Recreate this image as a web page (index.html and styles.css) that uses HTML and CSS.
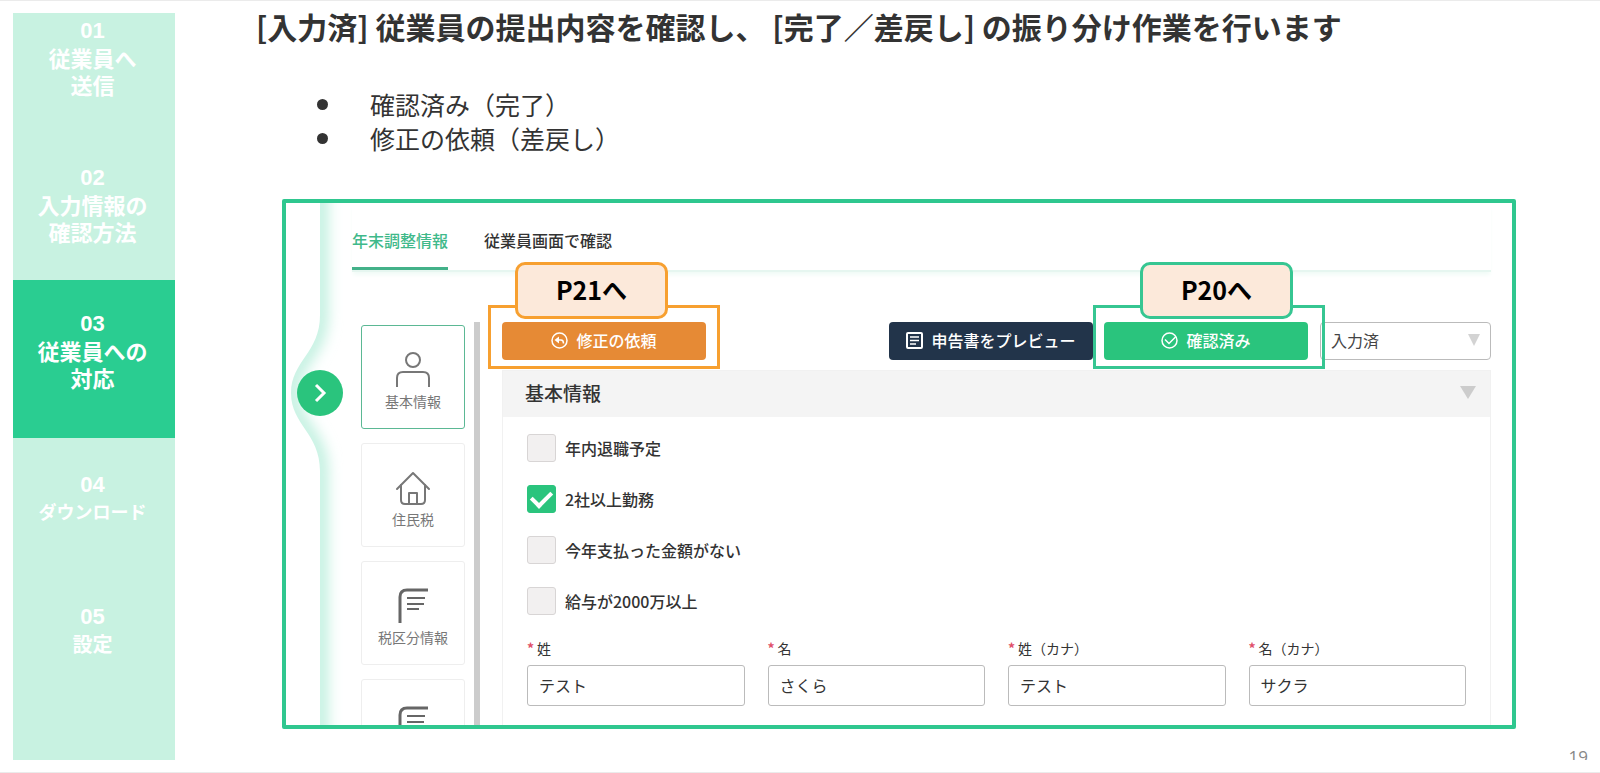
FILE: index.html
```html
<!DOCTYPE html>
<html lang="ja">
<head>
    <meta charset="utf-8">
    <title>従業員への対応</title>
    <link rel="stylesheet" href="styles.css">
</head>
<body>
    <aside class="steps">
        <div class="step"><b>01</b><span>従業員へ<br>送信</span></div>
        <div class="step"><b>02</b><span>入力情報の<br>確認方法</span></div>
        <div class="step active"><b>03</b><span>従業員への<br>対応</span></div>
        <div class="step step-download"><b>04</b><span>ダウンロード</span></div>
        <div class="step step-setting"><b>05</b><span>設定</span></div>
    </aside>

    <main class="main">
        <h1>[入力済] 従業員の提出内容を確認し、 [完了／差戻し] の振り分け作業を行います</h1>
        <ul class="points">
            <li>確認済み（完了）</li>
            <li>修正の依頼（差戻し）</li>
        </ul>

        <section class="app">
            <div class="rail">
                <svg class="rail-curve" width="66" height="1200" viewBox="0 0 66 1200">
                    <defs>
                        <clipPath id="rail-side">
                            <path d="M34 0V112C34 150 5 158 5 190C5 222 34 230 34 268V1200H66V0Z"/>
                        </clipPath>
                        <filter id="glow" x="-100%" y="-5%" width="300%" height="110%">
                            <feGaussianBlur stdDeviation="7"/>
                        </filter>
                    </defs>
                    <g clip-path="url(#rail-side)">
                        <path d="M34 -20V112C34 150 5 158 5 190C5 222 34 230 34 268V1220" fill="none" stroke="#c0f0df" stroke-width="16" filter="url(#glow)"/>
                    </g>
                </svg>
                <button class="rail-button" aria-label="開く">
                    <svg width="14" height="20" viewBox="0 0 14 20" fill="none" stroke="#fff" stroke-width="3"><path d="M3 2l8 8-8 8"/></svg>
                </button>
            </div>

            <div class="screen">
                <nav class="tabs">
                    <a href="#" class="tab current">年末調整情報</a>
                    <a href="#" class="tab">従業員画面で確認</a>
                </nav>

                <div class="columns">
                    <nav class="cards">
                        <a href="#" class="card selected">
                            <svg width="36" height="36" viewBox="0 0 36 36" fill="none" stroke="#777" stroke-width="2">
                                <circle cx="18" cy="8" r="7"/>
                                <path d="M2 35v-9q0-6 6-6h20q6 0 6 6v9"/>
                            </svg>
                            基本情報
                        </a>
                        <a href="#" class="card">
                            <svg width="36" height="36" viewBox="0 0 36 36" fill="none" stroke="#777" stroke-width="2" stroke-linejoin="round" stroke-linecap="round">
                                <path d="M2 19L18 3l16 16"/>
                                <path d="M6 15v15q0 4 4 4h16q4 0 4-4V15"/>
                                <path d="M14 34V23h8v11"/>
                            </svg>
                            住民税
                        </a>
                        <a href="#" class="card">
                            <svg width="36" height="36" viewBox="0 0 36 36" fill="none" stroke="#666">
                                <path d="M5 35V9q0-7 7-7h21" stroke-width="3"/>
                                <path d="M12 10h18M12 16h17M12 21h12" stroke-width="2"/>
                            </svg>
                            税区分情報
                        </a>
                        <a href="#" class="card">
                            <svg width="36" height="36" viewBox="0 0 36 36" fill="none" stroke="#666">
                                <path d="M5 35V9q0-7 7-7h21" stroke-width="3"/>
                                <path d="M12 10h18M12 16h17M12 21h12" stroke-width="2"/>
                            </svg>
                        </a>
                    </nav>
                    <div class="scrollbar"></div>

                    <div class="content">
                        <div class="toolbar">
                            <div class="marked orange">
                                <button class="btn btn-orange">
                                    <svg width="17" height="17" viewBox="0 0 17 17" fill="none" stroke="#fff" stroke-width="1.5">
                                        <circle cx="8.5" cy="8.5" r="7.5"/>
                                        <path d="M5 8h5q2.500 0 2.500 3.500"/>
                                        <path d="M8 4.500L3.500 8L8 11.500z" fill="#fff" stroke="none"/>
                                    </svg>
                                    修正の依頼
                                </button>
                                <a href="#" class="callout">P21へ</a>
                            </div>
                            <button class="btn btn-dark">
                                <svg width="17" height="17" viewBox="0 0 17 17" fill="none" stroke="#fff" stroke-width="2">
                                    <rect x="1" y="1" width="15" height="15" rx="1"/>
                                    <path d="M4 5h9M4 8.500h9M4 12h6" stroke-width="1.500"/>
                                </svg>
                                申告書をプレビュー
                            </button>
                            <div class="marked green">
                                <button class="btn btn-green">
                                    <svg width="17" height="17" viewBox="0 0 17 17" fill="none" stroke="#fff" stroke-width="1.5">
                                        <circle cx="8.5" cy="8.5" r="7.5"/>
                                        <path d="M4 7.500l4 4 6.500-6.500"/>
                                    </svg>
                                    確認済み
                                </button>
                                <a href="#" class="callout">P20へ</a>
                            </div>
                            <div class="status">
                                <select aria-label="状態">
                                    <option>入力済</option>
                                </select>
                                <i class="triangle"></i>
                            </div>
                        </div>

                        <div class="panel">
                            <div class="panel-head">
                                <h2>基本情報</h2>
                                <i class="triangle large"></i>
                            </div>
                            <form class="panel-body">
                                <label class="check"><input type="checkbox">年内退職予定</label>
                                <label class="check"><input type="checkbox" checked>2社以上勤務</label>
                                <label class="check"><input type="checkbox">今年支払った金額がない</label>
                                <label class="check"><input type="checkbox">給与が2000万以上</label>
                                <div class="fields">
                                    <div class="field">
                                        <label for="sei"><em>*</em>姓</label>
                                        <input type="text" id="sei" value="テスト">
                                    </div>
                                    <div class="field">
                                        <label for="mei"><em>*</em>名</label>
                                        <input type="text" id="mei" value="さくら">
                                    </div>
                                    <div class="field">
                                        <label for="sei_kana"><em>*</em>姓（カナ）</label>
                                        <input type="text" id="sei_kana" value="テスト">
                                    </div>
                                    <div class="field">
                                        <label for="mei_kana"><em>*</em>名（カナ）</label>
                                        <input type="text" id="mei_kana" value="サクラ">
                                    </div>
                                </div>
                            </form>
                        </div>
                    </div>
                </div>
            </div>
        </section>

        <footer class="footer"><span class="page-number">19</span></footer>
    </main>
</body>
</html>
```
FILE: styles.css
```css
* {
    box-sizing: border-box;
}
body {
    margin: 0;
    height: 100vh;
    display: flex;
    background-color: #fff;
    border-top: 1px solid #ebebeb;
    border-bottom: 1px solid #ebebeb;
    font-family: "Noto Sans CJK JP", sans-serif;
    color: #333;
}
a {
    color: inherit;
    text-decoration: none;
}
button, input, select {
    font-family: inherit;
    font-size: 16px;
    margin: 0;
}

/* left steps */
.steps {
    width: 162px;
    margin: 12px 0 12px 13px;
    background-color: #c8f2e1;
    color: #fff;
    text-align: center;
    font-size: 22px;
    font-weight: 700;
    line-height: 27px;
    display: flex;
    flex-direction: column;
}
.step {
    height: 147px;
    padding: 4px 3px 0 0;
}
.step b, .step span {
    display: block;
}
.step b {
    font-family: "Liberation Sans", sans-serif;
}
.step:nth-child(2) {
    height: 120px;
}
.step.active {
    height: 158px;
    padding-top: 30px;
    background-color: #2acd91;
}
.step-download {
    height: 132px;
    padding-top: 33px;
    font-size: 18px;
}
.step-setting {
    padding-top: 33px;
    font-size: 20px;
}
.step-download b, .step-setting b {
    font-size: 22px;
}

/* main */
.main {
    flex: 1;
    min-width: 0;
    display: flex;
    flex-direction: column;
}
h1 {
    margin: 5px 0 0 81px;
    font-size: 30px;
    line-height: 40px;
    font-weight: 700;
}
.points {
    margin: 41px 0 44px 142px;
    padding: 0;
    list-style: none;
    font-size: 25px;
    line-height: 34px;
}
.points li {
    display: flex;
    align-items: center;
    gap: 42px;
}
.points li::before {
    content: "";
    width: 11px;
    height: 11px;
    border-radius: 50%;
    background-color: #333;
}
.app {
    flex: 1;
    min-height: 0;
    overflow: hidden;
    margin: 0 84px 0 107px;
    padding-right: 21px;
    border: 4px solid #2fc78f;
    border-radius: 2px;
    display: flex;
}
.rail {
    width: 66px;
    flex-shrink: 0;
    position: relative;
}
.rail-curve {
    display: block;
}
.rail-button {
    position: absolute;
    top: 167px;
    left: 11px;
    width: 46px;
    height: 46px;
    padding: 0;
    border: none;
    border-radius: 50%;
    background-color: #2ac47d;
    display: flex;
    align-items: center;
    justify-content: center;
}
.screen {
    flex: 1;
    min-width: 0;
}
.tabs {
    display: flex;
    gap: 36px;
    height: 69px;
    border-bottom: 2px solid #e6f6f0;
    box-shadow: 0 4px 4px -1px #f1fbf7;
    font-size: 16px;
    line-height: 24px;
    font-weight: 500;
}
.tab {
    padding-top: 25px;
}
.tab.current {
    color: #3fb98a;
    border-bottom: 3px solid #43b189;
}
.columns {
    display: flex;
    padding: 50px 0 0 9px;
}
.cards {
    width: 104px;
    padding-top: 3px;
    display: flex;
    flex-direction: column;
    gap: 14px;
}
.card {
    height: 104px;
    padding-top: 26px;
    border: 1px solid #eee;
    border-radius: 3px;
    display: flex;
    flex-direction: column;
    align-items: center;
    gap: 3px;
    font-size: 14px;
    line-height: 20px;
    color: #777;
}
.card.selected {
    border-color: #5bb894;
}
.scrollbar {
    width: 6px;
    margin: 0 22px 0 9px;
    background-color: #ccc;
}
.content {
    flex: 1;
    min-width: 0;
}

/* toolbar */
.toolbar {
    display: flex;
    height: 38px;
}
.marked {
    position: relative;
}
.marked::before {
    content: "";
    position: absolute;
    z-index: 1;
    inset: -17px -14px -9px;
    border: 3px solid #f7a030;
    pointer-events: none;
}
.marked.green::before {
    inset: -17px -17px -9px -11px;
    border-color: #36c692;
}
.callout {
    position: absolute;
    z-index: 2;
    top: -60px;
    left: 13px;
    width: 153px;
    height: 57px;
    border: 3px solid #f7a030;
    border-radius: 10px;
    background-color: #fce9da;
    color: #000;
    font-size: 25px;
    line-height: 48px;
    font-weight: 700;
    text-align: center;
}
.green .callout {
    left: 36px;
    border-color: #36c692;
}
.btn {
    width: 204px;
    height: 38px;
    padding: 0 0 2px;
    border: none;
    border-radius: 4px;
    color: #fff;
    font-weight: 500;
    display: flex;
    align-items: center;
    justify-content: center;
    gap: 8px;
}
.btn-orange {
    background-color: #e68a35;
}
.btn-dark {
    margin: 0 11px 0 auto;
    background-color: #22344a;
}
.btn-green {
    background-color: #2ac47d;
}
.status {
    position: relative;
    width: 171px;
    margin-left: 12px;
}
.status select {
    appearance: none;
    width: 100%;
    height: 38px;
    padding: 0 10px 2px;
    border: 1px solid #bbb;
    border-radius: 4px;
    background-color: #fff;
    color: #444;
}
.triangle {
    border-top: 12px solid #d3d3d3;
    border-left: 6px solid transparent;
    border-right: 6px solid transparent;
}
.status .triangle {
    position: absolute;
    top: 12px;
    right: 11px;
}
.triangle.large {
    border-top: 13px solid #ccc;
    border-left-width: 8px;
    border-right-width: 8px;
}

/* panel */
.panel {
    margin-top: 10px;
    border: 1px solid #f1f1f1;
    border-bottom: none;
}
.panel-head {
    display: flex;
    justify-content: space-between;
    align-items: center;
    height: 46px;
    padding: 0 14px 3px 22px;
    background-color: #f4f4f4;
}
h2 {
    margin: 0;
    font-size: 19px;
    line-height: 24px;
    font-weight: 500;
}
.panel-body {
    height: 400px;
    padding: 17px 24px;
    display: flex;
    flex-direction: column;
    gap: 23px;
}
.check {
    display: flex;
    align-items: center;
    gap: 9px;
    height: 28px;
    font-size: 16px;
    line-height: 24px;
    font-weight: 500;
}
.check input {
    appearance: none;
    width: 29px;
    height: 28px;
    border: 1px solid #d8d5d5;
    border-radius: 3px;
    background-color: #f2f0f0;
    display: flex;
    align-items: center;
    justify-content: center;
}
.check input:checked {
    border-color: #2ac47d;
    background-color: #2ac47d;
}
.check input:checked::before {
    content: "";
    width: 9px;
    height: 16px;
    margin-bottom: 5px;
    border: solid #fff;
    border-width: 0 4px 4px 0;
    transform: rotate(45deg);
}
.fields {
    display: grid;
    grid-template-columns: repeat(4, 1fr);
    gap: 23px;
}
.field {
    display: flex;
    flex-direction: column;
    gap: 7px;
}
.field label {
    font-size: 14px;
    line-height: 20px;
}
.field em {
    margin-right: 3px;
    font-style: normal;
    font-weight: 700;
    color: #e0506a;
}
.field input {
    width: 100%;
    height: 41px;
    padding: 0 11px 2px;
    border: 1px solid #bbb;
    border-radius: 3px;
    color: #333;
}

.footer {
    height: 43px;
    display: flex;
    justify-content: flex-end;
    align-items: flex-start;
    padding: 20px 12px 0 0;
}
.page-number {
    height: 11px;
    overflow: hidden;
    font-family: "Open Sans", sans-serif;
    font-size: 17px;
    line-height: 16px;
    color: #888;
}
```
